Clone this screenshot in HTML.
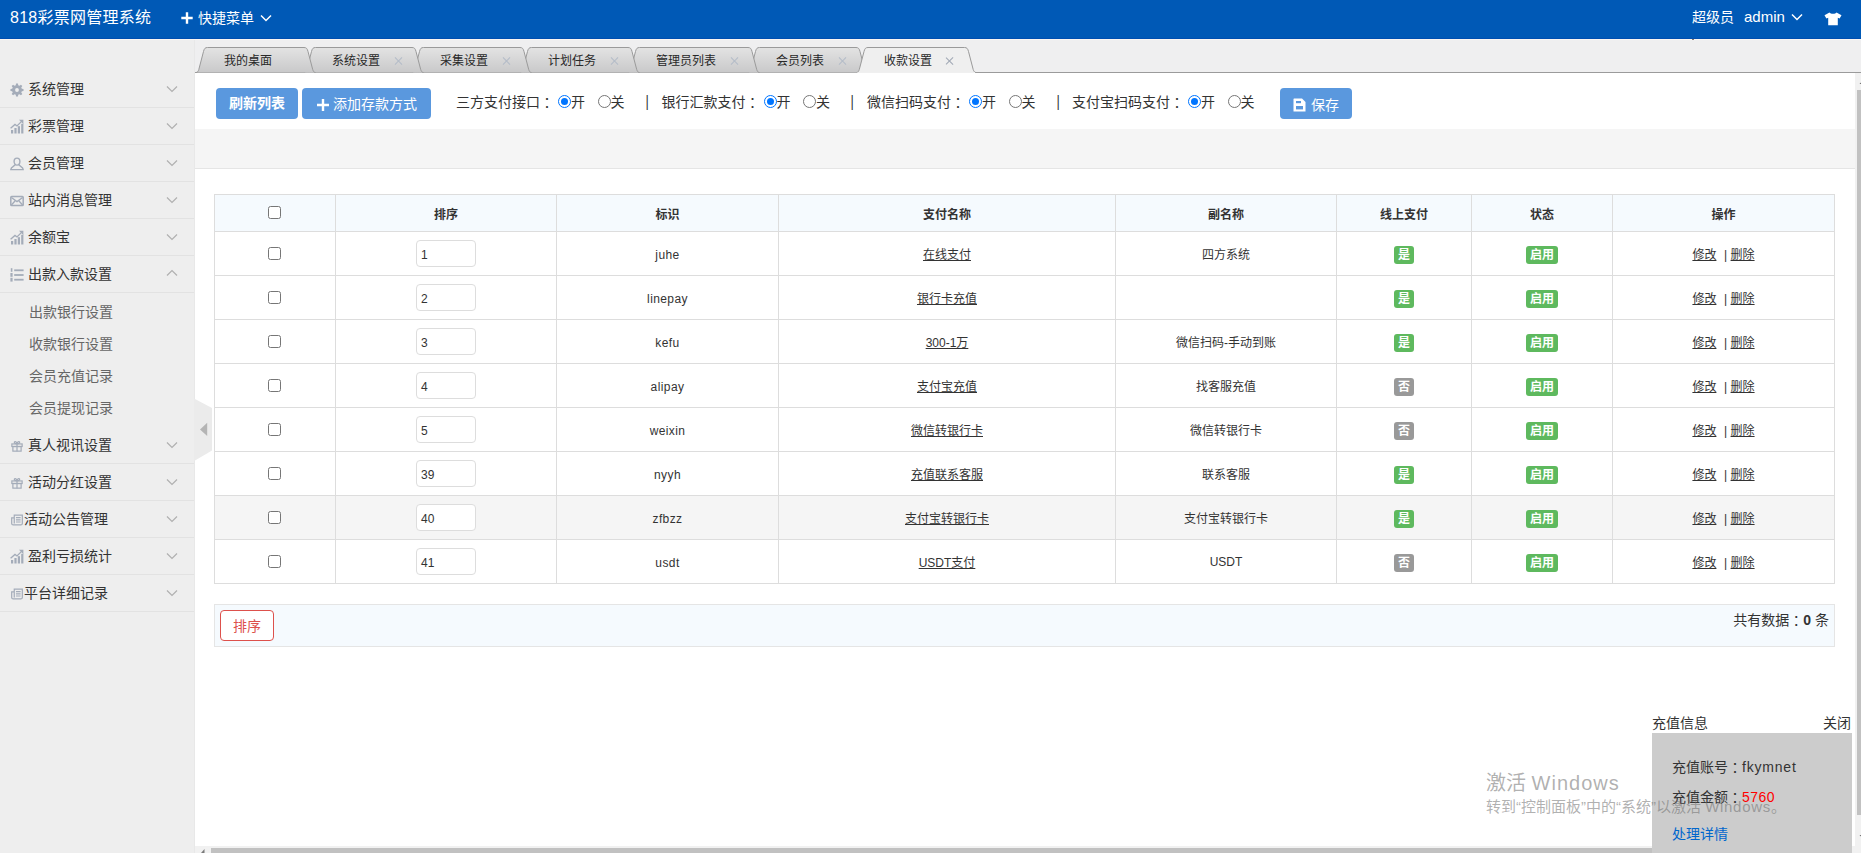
<!DOCTYPE html>
<html lang="zh-CN">
<head>
<meta charset="utf-8">
<title>818彩票网管理系统</title>
<style>
*{box-sizing:border-box;margin:0;padding:0}
html,body{width:1861px;height:853px;overflow:hidden;background:#fff}
body{font-family:"Liberation Sans","Noto Sans CJK SC",sans-serif;font-size:14px;color:#333;position:relative}
i{font-style:normal;display:block}
u{text-decoration:underline;text-underline-offset:1px}
/* header */
#hd{position:absolute;left:0;top:0;width:1861px;height:39px;background:#0059b6;color:#fff;border-bottom:1px solid #004eb0;z-index:6}
#hl{position:absolute;left:0;top:39px;width:1861px;height:1px;background:#faf6f2;z-index:6}
#hl i{position:absolute;left:1692px;top:0;width:2px;height:1px;background:#8a7c6c}
#hd .logo{position:absolute;left:10px;top:0;line-height:36px;font-size:16px;letter-spacing:.25px;white-space:nowrap}
#hd .quick{position:absolute;left:198px;top:0;line-height:36px;font-size:14px;white-space:nowrap}
#hd .u1{position:absolute;left:1692px;top:0;line-height:35px;font-size:14px;white-space:nowrap}
#hd .u2{position:absolute;left:1744px;top:0;line-height:33px;font-size:15px;white-space:nowrap}
#hd svg{position:absolute}
/* sidebar */
#side{position:absolute;left:0;top:39px;width:195px;border-right:1px solid #e8e8e8;height:814px;background:#eeeeee}
#side .it{position:absolute;left:0;width:194px;height:37px;border-bottom:1px solid #e2e2e2;line-height:36px;font-size:14px;color:#333;white-space:nowrap}
#side .it span{position:absolute;top:0}
#side .it .ic{position:absolute;left:10px;top:12px;width:14px;height:14px;line-height:0}
#side .it .ic svg{display:block}
#side .it .ic svg[height="15"]{margin-top:-1px}
#side .it .chev{position:absolute;left:166px;top:14px}
#side .sub{position:absolute;left:29px;font-size:14px;color:#666;line-height:20px;white-space:nowrap}
#fold{position:absolute;left:194px;top:399px;width:18px;height:62px;z-index:5}
/* tabs */
#tabbar{position:absolute;left:195px;top:39px;width:1666px;height:35px;background:#efeff0}
#tabbar svg{position:absolute;left:0;top:0}
#tabbar .tt{position:absolute;top:14px;font-size:12px;line-height:16px;color:#282828;white-space:nowrap}
#tabbar .tx{position:absolute;top:17.5px;width:8px;height:8px}
#tabbar .tx:before,#tabbar .tx:after{content:"";position:absolute;left:3.5px;top:-1px;width:1px;height:10px;background:#b4bcc8;transform:rotate(45deg)}
#tabbar .tx:after{transform:rotate(-45deg)}
#tabbar .tx.act:before,#tabbar .tx.act:after{background:#a0a8b4;width:1.4px;left:3.3px}
/* main */
#main{position:absolute;left:195px;top:73px;width:1661px;height:774px;background:#fff;overflow:hidden}
#tool{position:absolute;left:0;top:0;width:1661px;height:56px;background:#fff}
.btn{position:absolute;top:15px;height:31px;border-radius:4px;background:#5a98de;color:#fff;font-size:14px;line-height:31px;white-space:nowrap;text-align:center}
.tl{position:absolute;top:19px;line-height:20px;font-size:14px;color:#333;white-space:nowrap}
.c{font-family:"Noto Sans CJK JP","Noto Sans CJK SC",sans-serif;position:relative;top:1px;line-height:0}
.tl.bar{font-size:16px;top:18.5px;transform:scaleX(.8)}
.rd{position:absolute;top:22px;width:13px;height:13px;border-radius:50%;border:1px solid #767676;background:#fff}
.rd.on{border-color:#0075ff}
.rd.on:after{content:"";position:absolute;left:2px;top:2px;width:7px;height:7px;border-radius:50%;background:#0075ff}
#band{position:absolute;left:0;top:56px;width:1661px;height:40px;background:#f5f5f5;border-bottom:1px solid #e5e5e5}
table{position:absolute;left:19px;top:121px;width:1620px;border-collapse:collapse;table-layout:fixed;font-size:12px;color:#333}
td,th{border:1px solid #ddd;text-align:center;vertical-align:middle;padding:0}
th{height:37px;background:#f5fafe;font-weight:bold;color:#333}
td{height:44px}
tr.hov td{background:#f5f5f5}
td:nth-child(3){padding-top:2px;letter-spacing:.4px}
.cb{display:inline-block;width:13px;height:13px;border:1px solid #767676;border-radius:2.5px;background:#fff;vertical-align:middle;position:relative;top:-1px;left:-1px}
.inp{display:inline-block;width:60px;height:27px;border:1px solid #ddd;border-radius:4px;background:#fff;text-align:left;padding-left:4px;line-height:28px;font-size:12px;vertical-align:middle;position:relative;top:0}
.lb{display:inline-block;height:18px;line-height:18px;padding:0 4px;border-radius:3px;color:#fff;font-weight:bold;font-size:12px;vertical-align:middle;position:relative;top:1px}
.lb.g{background:#5eb95e}
.lb.d{background:#999}
#foot{position:absolute;left:19px;top:531px;width:1621px;height:43px;background:#f5fafe;border:1px solid #e5e5e5}
#foot .sort{position:absolute;left:5px;top:5px;width:54px;height:31px;border:1px solid #dd514c;border-radius:4px;color:#dd514c;background:#fff;font-size:14px;line-height:31px;text-align:center}
#foot .cnt{position:absolute;right:5px;top:5px;line-height:20px;font-size:14px;color:#333;white-space:nowrap}
/* scrollbars */
#vs{position:absolute;left:1855px;top:73px;width:6px;height:780px;background:#f1f1f1}
#vs i{position:absolute;left:2px;top:17px;width:4px;height:725px;background:#c1c1c1}
#hs{position:absolute;left:195px;top:846px;width:1660px;height:7px;background:#f1f1f1}
#hs i{position:absolute;left:16px;top:2px;width:1600px;height:5px;background:#c1c1c1}
/* popup */
#pop{position:absolute;left:1652px;top:713px;width:200px;height:140px;font-size:14px;color:#333}
#pop .h1{position:absolute;left:0;top:0;line-height:20px;white-space:nowrap}
#pop .h2{position:absolute;right:1px;top:0;line-height:20px;white-space:nowrap}
#pop .box{position:absolute;left:0;top:20px;width:200px;height:120px;background:#cccccc}
#pop .l{position:absolute;left:20px;line-height:20px;white-space:nowrap}
#wm{position:absolute;left:1486px;top:769px;color:rgba(110,110,110,.55);white-space:nowrap}
#wm .a{font-size:20px;line-height:28px}
#wm .a span{letter-spacing:1px}
#wm .b span{letter-spacing:.7px}
#wm .b{font-size:15px;line-height:20px;margin-top:0}
</style>
</head>
<body>
<div id="hd">
  <div class="logo">818彩票网管理系统</div>
  <svg style="left:181px;top:12px" width="12" height="12" viewBox="0 0 12 12"><path d="M6 0.3 V11.7 M0.3 6 H11.7" stroke="#fff" stroke-width="2.4" fill="none"/></svg>
  <div class="quick">快捷菜单</div>
  <svg style="left:260px;top:14px" width="12" height="8" viewBox="0 0 12 8"><path d="M1 1.5 L6 6.5 L11 1.5" stroke="#fff" stroke-width="1.5" fill="none"/></svg>
  <div class="u1">超级员</div>
  <div class="u2">admin</div>
  <svg style="left:1791px;top:13px" width="12" height="8" viewBox="0 0 12 8"><path d="M1 1.5 L6 6.5 L11 1.5" stroke="#fff" stroke-width="1.5" fill="none"/></svg>
  <svg style="left:1824px;top:12px" width="18" height="14" viewBox="0 0 18 14"><path d="M5.5 0.5 C6.5 2.2 11.5 2.2 12.5 0.5 L17.5 3.2 L15.6 6.6 L13.8 5.8 V13.2 H4.2 V5.8 L2.4 6.6 L0.5 3.2 Z" fill="#fff"/></svg>
</div>
<div id="hl"><i></i></div>
<div id="side">
<div class="it" style="top:32px"><i class="ic"><svg width="14" height="14" viewBox="0 0 14 14"><path fill-rule="evenodd" fill="#a4acb9" d="M13.52,5.97 L13.52,8.03 L11.86,8.17 L11.26,9.61 L12.34,10.88 L10.88,12.34 L9.61,11.26 L8.17,11.86 L8.03,13.52 L5.97,13.52 L5.83,11.86 L4.39,11.26 L3.12,12.34 L1.66,10.88 L2.74,9.61 L2.14,8.17 L0.48,8.03 L0.48,5.97 L2.14,5.83 L2.74,4.39 L1.66,3.12 L3.12,1.66 L4.39,2.74 L5.83,2.14 L5.97,0.48 L8.03,0.48 L8.17,2.14 L9.61,2.74 L10.88,1.66 L12.34,3.12 L11.26,4.39 L11.86,5.83 Z M8.9,7 A1.9,1.9 0 1,0 5.1,7 A1.9,1.9 0 1,0 8.9,7 Z"/></svg></i><span style="left:28px">系统管理</span><svg class="chev"  width="12" height="8" viewBox="0 0 12 8"><path d="M1 1.5 L6 6.5 L11 1.5" fill="none" stroke="#b0b0b0" stroke-width="1.2"/></svg></div>
<div class="it" style="top:69px"><i class="ic"><svg width="14" height="15" viewBox="0 0 14 15"><g fill="#a4acb9"><rect x="1" y="11" width="2.2" height="3.5"/><rect x="4.4" y="9" width="2.2" height="5.5"/><rect x="7.8" y="7.2" width="2.2" height="7.3"/><rect x="11.2" y="4.8" width="2.2" height="9.7"/></g><path d="M0.6 9.2 L5 5.4 L7 7 L11.6 2.4" fill="none" stroke="#a4acb9" stroke-width="1.3"/><path d="M9 0.8 H13.4 V5.2 Z" fill="#a4acb9"/></svg></i><span style="left:28px">彩票管理</span><svg class="chev"  width="12" height="8" viewBox="0 0 12 8"><path d="M1 1.5 L6 6.5 L11 1.5" fill="none" stroke="#b0b0b0" stroke-width="1.2"/></svg></div>
<div class="it" style="top:106px"><i class="ic"><svg width="14" height="14" viewBox="0 0 14 14"><g fill="none" stroke="#a4acb9" stroke-width="1.4"><ellipse cx="7" cy="4.6" rx="2.9" ry="3.5"/><path d="M5.2 7.6 C4.5 9.6 1 9.2 0.8 12.6 H13.2 C13 9.2 9.5 9.6 8.8 7.6"/></g></svg></i><span style="left:28px">会员管理</span><svg class="chev"  width="12" height="8" viewBox="0 0 12 8"><path d="M1 1.5 L6 6.5 L11 1.5" fill="none" stroke="#b0b0b0" stroke-width="1.2"/></svg></div>
<div class="it" style="top:143px"><i class="ic"><svg width="14" height="14" viewBox="0 0 14 14"><g fill="none" stroke="#a4acb9" stroke-width="1.5"><rect x="0.8" y="2.6" width="12.4" height="9" rx="0.8"/><path d="M1.4 3.4 L7 7.6 L12.6 3.4 M1.4 11 L5 7 M12.6 11 L9 7" stroke-width="1.3"/></g></svg></i><span style="left:28px">站内消息管理</span><svg class="chev"  width="12" height="8" viewBox="0 0 12 8"><path d="M1 1.5 L6 6.5 L11 1.5" fill="none" stroke="#b0b0b0" stroke-width="1.2"/></svg></div>
<div class="it" style="top:180px"><i class="ic"><svg width="14" height="15" viewBox="0 0 14 15"><g fill="#a4acb9"><rect x="1" y="11" width="2.2" height="3.5"/><rect x="4.4" y="9" width="2.2" height="5.5"/><rect x="7.8" y="7.2" width="2.2" height="7.3"/><rect x="11.2" y="4.8" width="2.2" height="9.7"/></g><path d="M0.6 9.2 L5 5.4 L7 7 L11.6 2.4" fill="none" stroke="#a4acb9" stroke-width="1.3"/><path d="M9 0.8 H13.4 V5.2 Z" fill="#a4acb9"/></svg></i><span style="left:28px">余额宝</span><svg class="chev"  width="12" height="8" viewBox="0 0 12 8"><path d="M1 1.5 L6 6.5 L11 1.5" fill="none" stroke="#b0b0b0" stroke-width="1.2"/></svg></div>
<div class="it" style="top:217px"><i class="ic"><svg width="14" height="14" viewBox="0 0 14 14"><g fill="#a4acb9"><rect x="4.2" y="1.4" width="9.4" height="1.8"/><rect x="4.2" y="6.1" width="9.4" height="1.8"/><rect x="4.2" y="10.8" width="9.4" height="1.8"/><rect x="0.8" y="0.2" width="1.6" height="3.6"/><rect x="0.4" y="5" width="2.2" height="3.8"/><rect x="0.4" y="9.8" width="2.2" height="3.8"/></g></svg></i><span style="left:28px">出款入款设置</span><svg class="chev" style="top:13px" width="12" height="8" viewBox="0 0 12 8"><path d="M1 6.5 L6 1.5 L11 6.5" fill="none" stroke="#b0b0b0" stroke-width="1.2"/></svg></div>
<div class="it" style="top:388px"><i class="ic"><svg style="margin:1px 0 0 1px" width="12" height="12" viewBox="0 0 14 14"><g fill="none" stroke="#a4acb9" stroke-width="1.4"><rect x="1" y="4.6" width="12" height="3"/><rect x="2.2" y="7.6" width="9.6" height="5.4"/><path d="M7 4.6 V13 M7 4.4 C5 4.4 3.4 3.6 4 2.2 C4.8 1 6.6 2.4 7 4.4 C7.4 2.4 9.2 1 10 2.2 C10.6 3.6 9 4.4 7 4.4"/></g></svg></i><span style="left:28px">真人视讯设置</span><svg class="chev"  width="12" height="8" viewBox="0 0 12 8"><path d="M1 1.5 L6 6.5 L11 1.5" fill="none" stroke="#b0b0b0" stroke-width="1.2"/></svg></div>
<div class="it" style="top:425px"><i class="ic"><svg style="margin:1px 0 0 1px" width="12" height="12" viewBox="0 0 14 14"><g fill="none" stroke="#a4acb9" stroke-width="1.4"><rect x="1" y="4.6" width="12" height="3"/><rect x="2.2" y="7.6" width="9.6" height="5.4"/><path d="M7 4.6 V13 M7 4.4 C5 4.4 3.4 3.6 4 2.2 C4.8 1 6.6 2.4 7 4.4 C7.4 2.4 9.2 1 10 2.2 C10.6 3.6 9 4.4 7 4.4"/></g></svg></i><span style="left:28px">活动分红设置</span><svg class="chev"  width="12" height="8" viewBox="0 0 12 8"><path d="M1 1.5 L6 6.5 L11 1.5" fill="none" stroke="#b0b0b0" stroke-width="1.2"/></svg></div>
<div class="it" style="top:462px"><i class="ic"><svg style="margin:1px 0 0 1px" width="12" height="12" viewBox="0 0 14 14"><g fill="none" stroke="#a4acb9" stroke-width="1.4"><path d="M3.8 1.4 H13.2 V11 C13.2 12.2 12.6 12.8 11.4 12.8 H2.6 C1.4 12.8 0.8 12.2 0.8 11 V4.6 H3.8 Z M3.8 4.6 V11"/><path d="M5.8 4.2 H11.2 M5.8 6.8 H11.2 M5.8 9.4 H11.2" stroke-width="1.3"/></g></svg></i><span style="left:24px">活动公告管理</span><svg class="chev"  width="12" height="8" viewBox="0 0 12 8"><path d="M1 1.5 L6 6.5 L11 1.5" fill="none" stroke="#b0b0b0" stroke-width="1.2"/></svg></div>
<div class="it" style="top:499px"><i class="ic"><svg width="14" height="15" viewBox="0 0 14 15"><g fill="#a4acb9"><rect x="1" y="11" width="2.2" height="3.5"/><rect x="4.4" y="9" width="2.2" height="5.5"/><rect x="7.8" y="7.2" width="2.2" height="7.3"/><rect x="11.2" y="4.8" width="2.2" height="9.7"/></g><path d="M0.6 9.2 L5 5.4 L7 7 L11.6 2.4" fill="none" stroke="#a4acb9" stroke-width="1.3"/><path d="M9 0.8 H13.4 V5.2 Z" fill="#a4acb9"/></svg></i><span style="left:28px">盈利亏损统计</span><svg class="chev"  width="12" height="8" viewBox="0 0 12 8"><path d="M1 1.5 L6 6.5 L11 1.5" fill="none" stroke="#b0b0b0" stroke-width="1.2"/></svg></div>
<div class="it" style="top:536px"><i class="ic"><svg style="margin:1px 0 0 1px" width="12" height="12" viewBox="0 0 14 14"><g fill="none" stroke="#a4acb9" stroke-width="1.4"><path d="M3.8 1.4 H13.2 V11 C13.2 12.2 12.6 12.8 11.4 12.8 H2.6 C1.4 12.8 0.8 12.2 0.8 11 V4.6 H3.8 Z M3.8 4.6 V11"/><path d="M5.8 4.2 H11.2 M5.8 6.8 H11.2 M5.8 9.4 H11.2" stroke-width="1.3"/></g></svg></i><span style="left:24px">平台详细记录</span><svg class="chev"  width="12" height="8" viewBox="0 0 12 8"><path d="M1 1.5 L6 6.5 L11 1.5" fill="none" stroke="#b0b0b0" stroke-width="1.2"/></svg></div>
<div class="sub" style="top:263px">出款银行设置</div>
<div class="sub" style="top:295px">收款银行设置</div>
<div class="sub" style="top:327px">会员充值记录</div>
<div class="sub" style="top:359px">会员提现记录</div>
</div>
<svg id="fold" viewBox="0 0 18 62"><path d="M0 0 L1 0 L18 9 V51.5 L1 61.5 L0 61.5 Z" fill="#ebebeb"/><path d="M6 30.4 L13.2 23.8 V37 Z" fill="#b4b4b4"/></svg>
<div id="tabbar">
<svg id="tabsvg" width="1666" height="35" viewBox="195 0 1666 35">
<defs><linearGradient id="tg" x1="0" y1="0" x2="0" y2="1"><stop offset="0" stop-color="#e3e3e3"/><stop offset="1" stop-color="#c9c9ca"/></linearGradient></defs>
<rect x="195" y="33" width="1666" height="1" fill="#9b9b9b"/>
<path d="M748,33.5 c1.5,0 2.2,-1.2 2.8,-3 l4.7,-18 c0.7,-2.8 1.6,-4 4,-4 H856.0 c2.4,0 3.3,1.2 4,4 l4.7,18 c0.6,1.8 1.3,3 2.8,3" fill="url(#tg)" stroke="#9a9a9a" stroke-width="1"/>
<path d="M628,33.5 c1.5,0 2.2,-1.2 2.8,-3 l4.7,-18 c0.7,-2.8 1.6,-4 4,-4 H748.0 c2.4,0 3.3,1.2 4,4 l4.7,18 c0.6,1.8 1.3,3 2.8,3" fill="url(#tg)" stroke="#9a9a9a" stroke-width="1"/>
<path d="M520,33.5 c1.5,0 2.2,-1.2 2.8,-3 l4.7,-18 c0.7,-2.8 1.6,-4 4,-4 H628.0 c2.4,0 3.3,1.2 4,4 l4.7,18 c0.6,1.8 1.3,3 2.8,3" fill="url(#tg)" stroke="#9a9a9a" stroke-width="1"/>
<path d="M412,33.5 c1.5,0 2.2,-1.2 2.8,-3 l4.7,-18 c0.7,-2.8 1.6,-4 4,-4 H520.0 c2.4,0 3.3,1.2 4,4 l4.7,18 c0.6,1.8 1.3,3 2.8,3" fill="url(#tg)" stroke="#9a9a9a" stroke-width="1"/>
<path d="M304,33.5 c1.5,0 2.2,-1.2 2.8,-3 l4.7,-18 c0.7,-2.8 1.6,-4 4,-4 H412.0 c2.4,0 3.3,1.2 4,4 l4.7,18 c0.6,1.8 1.3,3 2.8,3" fill="url(#tg)" stroke="#9a9a9a" stroke-width="1"/>
<path d="M196,33.5 c1.5,0 2.2,-1.2 2.8,-3 l4.7,-18 c0.7,-2.8 1.6,-4 4,-4 H304.0 c2.4,0 3.3,1.2 4,4 l4.7,18 c0.6,1.8 1.3,3 2.8,3" fill="url(#tg)" stroke="#9a9a9a" stroke-width="1"/>
<path d="M856.5,33.5 c1.5,0 2.2,-1.2 2.8,-3 l4.7,-18 c0.7,-2.8 1.6,-4 4,-4 H964.5 c2.4,0 3.3,1.2 4,4 l4.7,18 c0.6,1.8 1.3,3 2.8,3 V35 H856 Z" fill="#efefef" stroke="none"/>
<path d="M856.5,33.5 c1.5,0 2.2,-1.2 2.8,-3 l4.7,-18 c0.7,-2.8 1.6,-4 4,-4 H964.5 c2.4,0 3.3,1.2 4,4 l4.7,18 c0.6,1.8 1.3,3 2.8,3" fill="none" stroke="#9a9a9a" stroke-width="1"/>
<rect x="857.5" y="33" width="117.5" height="2" fill="#f0f0f0"/>
</svg>
<span class="tt" style="left:29px">我的桌面</span>
<span class="tt" style="left:137px">系统设置</span>
<i class="tx" style="left:199px"></i>
<span class="tt" style="left:245px">采集设置</span>
<i class="tx" style="left:307px"></i>
<span class="tt" style="left:353px">计划任务</span>
<i class="tx" style="left:415px"></i>
<span class="tt" style="left:461px">管理员列表</span>
<i class="tx" style="left:535px"></i>
<span class="tt" style="left:581px">会员列表</span>
<i class="tx" style="left:643px"></i>
<span class="tt" style="left:689px">收款设置</span>
<i class="tx act" style="left:751px"></i>
</div>
<div id="main">
  <div id="tool">
    <div class="btn" style="left:21px;width:82px;font-weight:bold">刷新列表</div>
    <div class="btn" style="left:107px;width:129px;padding-left:17px;padding-top:1px">添加存款方式<svg style="position:absolute;left:15px;top:11px" width="12" height="12" viewBox="0 0 12 12"><path d="M6 0 V12 M0 6 H12" stroke="#fff" stroke-width="2.4"/></svg></div>
<span class="tl" style="left:261px">三方支付接口<span class="c" lang="ja">：</span></span><i class="rd on" style="left:363px"></i><span class="tl" style="left:376px">开</span><i class="rd" style="left:402.5px"></i><span class="tl" style="left:415.5px">关</span>
<span class="tl bar" style="left:449.5px">|</span>
<span class="tl" style="left:466.5px">银行汇款支付<span class="c" lang="ja">：</span></span><i class="rd on" style="left:568.5px"></i><span class="tl" style="left:581.5px">开</span><i class="rd" style="left:608px"></i><span class="tl" style="left:621px">关</span>
<span class="tl bar" style="left:655px">|</span>
<span class="tl" style="left:672px">微信扫码支付<span class="c" lang="ja">：</span></span><i class="rd on" style="left:774px"></i><span class="tl" style="left:787px">开</span><i class="rd" style="left:813.5px"></i><span class="tl" style="left:826.5px">关</span>
<span class="tl bar" style="left:860.5px">|</span>
<span class="tl" style="left:877px">支付宝扫码支付<span class="c" lang="ja">：</span></span><i class="rd on" style="left:993px"></i><span class="tl" style="left:1006px">开</span><i class="rd" style="left:1032.5px"></i><span class="tl" style="left:1045.5px">关</span>
    <div class="btn" style="left:1085px;width:72px;padding-left:18px;padding-top:1.5px">保存<svg style="position:absolute;left:13px;top:10px" width="13" height="14" viewBox="0 0 13 14"><path d="M1 0.5 H9 L12.5 4 V13.5 H0.5 V1 Z" fill="#fff"/><rect x="3" y="3" width="5" height="2.2" fill="#5a98de"/><rect x="3" y="8" width="7" height="3.4" fill="#5a98de"/></svg></div>
  </div>
  <div id="band"></div>
  <table>
    <colgroup><col style="width:121px"><col style="width:221px"><col style="width:222px"><col style="width:337px"><col style="width:221px"><col style="width:135px"><col style="width:141px"><col style="width:222px"></colgroup>
    <tr><th><i class="cb"></i></th><th>排序</th><th>标识</th><th>支付名称</th><th>副名称</th><th>线上支付</th><th>状态</th><th>操作</th></tr>
<tr><td><i class="cb"></i></td><td><span class="inp">1</span></td><td>juhe</td><td><u>在线支付</u></td><td>四方系统</td><td><span class="lb g">是</span></td><td><span class="lb g">启用</span></td><td><u>修改</u> &nbsp;<span style="margin-left:1px">|</span> <u>删除</u></td></tr>
<tr><td><i class="cb"></i></td><td><span class="inp">2</span></td><td>linepay</td><td><u>银行卡充值</u></td><td></td><td><span class="lb g">是</span></td><td><span class="lb g">启用</span></td><td><u>修改</u> &nbsp;<span style="margin-left:1px">|</span> <u>删除</u></td></tr>
<tr><td><i class="cb"></i></td><td><span class="inp">3</span></td><td>kefu</td><td><u>300-1万</u></td><td>微信扫码-手动到账</td><td><span class="lb g">是</span></td><td><span class="lb g">启用</span></td><td><u>修改</u> &nbsp;<span style="margin-left:1px">|</span> <u>删除</u></td></tr>
<tr><td><i class="cb"></i></td><td><span class="inp">4</span></td><td>alipay</td><td><u>支付宝充值</u></td><td>找客服充值</td><td><span class="lb d">否</span></td><td><span class="lb g">启用</span></td><td><u>修改</u> &nbsp;<span style="margin-left:1px">|</span> <u>删除</u></td></tr>
<tr><td><i class="cb"></i></td><td><span class="inp">5</span></td><td>weixin</td><td><u>微信转银行卡</u></td><td>微信转银行卡</td><td><span class="lb d">否</span></td><td><span class="lb g">启用</span></td><td><u>修改</u> &nbsp;<span style="margin-left:1px">|</span> <u>删除</u></td></tr>
<tr><td><i class="cb"></i></td><td><span class="inp">39</span></td><td>nyyh</td><td><u>充值联系客服</u></td><td>联系客服</td><td><span class="lb g">是</span></td><td><span class="lb g">启用</span></td><td><u>修改</u> &nbsp;<span style="margin-left:1px">|</span> <u>删除</u></td></tr>
<tr class="hov"><td><i class="cb"></i></td><td><span class="inp">40</span></td><td>zfbzz</td><td><u>支付宝转银行卡</u></td><td>支付宝转银行卡</td><td><span class="lb g">是</span></td><td><span class="lb g">启用</span></td><td><u>修改</u> &nbsp;<span style="margin-left:1px">|</span> <u>删除</u></td></tr>
<tr><td><i class="cb"></i></td><td><span class="inp">41</span></td><td>usdt</td><td><u>USDT支付</u></td><td>USDT</td><td><span class="lb d">否</span></td><td><span class="lb g">启用</span></td><td><u>修改</u> &nbsp;<span style="margin-left:1px">|</span> <u>删除</u></td></tr>
  </table>
  <div id="foot"><div class="sort">排序</div><div class="cnt">共有数据<span class="c" lang="ja">：</span><b>0</b> 条</div></div>
</div>
<div id="vs"><i></i><svg style="position:absolute;left:3px;top:8px" width="3" height="5" viewBox="0 0 3 5"><path d="M3 1.5 L1.5 3 H3 Z" fill="#666"/></svg><svg style="position:absolute;left:3px;top:760px" width="3" height="5" viewBox="0 0 3 5"><path d="M3 3.5 L1.5 2 H3 Z" fill="#666"/></svg></div>
<div id="hs"><i></i><svg style="position:absolute;left:5px;top:2px" width="6" height="5" viewBox="0 0 6 5"><path d="M1 5 L4.5 1 V5 Z" fill="#7a7a7a"/></svg></div>
<div id="pop">
  <div class="h1">充值信息</div><div class="h2">关闭</div>
  <div class="box"></div>
  <div class="l" style="top:44px">充值账号<span class="c" lang="ja">：</span><span style="letter-spacing:.8px">fkymnet</span></div>
  <div class="l" style="top:73.5px">充值金额<span class="c" lang="ja">：</span><span style="color:#f00;letter-spacing:.5px">5760</span></div>
  <div class="l" style="top:111px;color:#06c">处理详情</div>
</div>
<div id="wm"><div class="a">激活 <span>Windows</span></div><div class="b">转到“控制面板”中的“系统”以激活 <span>Windows</span>。</div></div>
</body>
</html>
